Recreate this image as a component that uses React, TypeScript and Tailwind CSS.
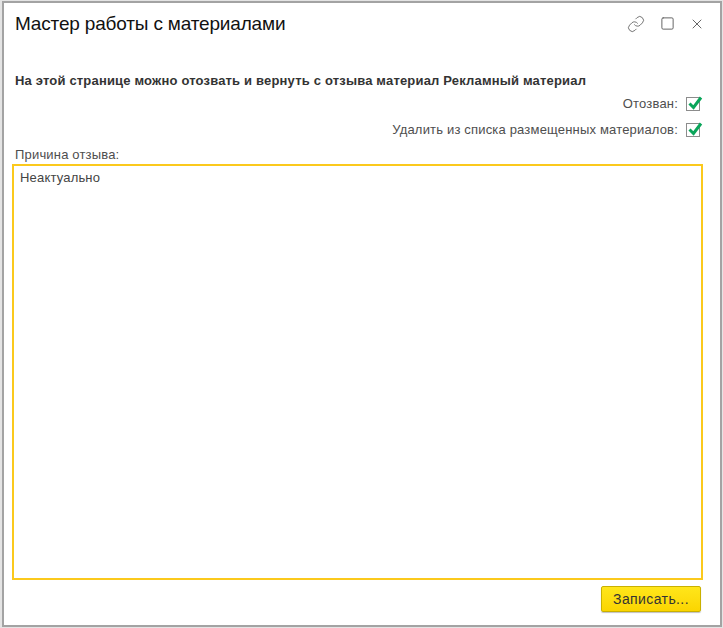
import { Link, Square, X } from 'lucide-react'

function CheckBox() {
  return (
    <span className="relative block h-[14px] w-[14px] border border-[#8c8c8c] bg-white">
      <svg viewBox="0 0 16 16" className="absolute -top-[3px] left-0 h-[16px] w-[16px]" fill="none">
        <path d="M2.5 8.5 L6.5 12.5 L14 2.5" stroke="#0aa55a" strokeWidth="3" />
      </svg>
    </span>
  )
}

export default function App() {
  return (
    <div className="h-[628px] w-[723px] bg-[#e4e4e4] pb-[1px] pl-[2px] pr-[1px] pt-[1px] font-['Liberation_Sans',Arial,sans-serif]">
      <div className="flex h-[626px] w-[720px] flex-col border-2 border-[#a3a3a3] bg-white">
        {/* Header */}
        <div className="flex h-[41px] items-center justify-between pl-[11px] pr-[15px]">
          <h1 className="text-[19px] font-normal leading-[24px] tracking-[-0.17px] text-[#111]">Мастер работы с материалами</h1>
          <div className="flex items-center gap-[14.5px] text-[#666]">
            <Link size={18} strokeWidth={1.2} />
            <Square size={15} strokeWidth={1.6} />
            <X size={16} strokeWidth={1.5} />
          </div>
        </div>

        {/* Body */}
        <div className="flex flex-1 flex-col pl-[8px] pr-[17px] pt-[29px] text-[13px] leading-[16px] tracking-[0.18px] text-[#4e4e4e]">
          <p className="whitespace-nowrap pl-[3px] font-bold text-[#333]">
            На этой странице можно отозвать и вернуть с отзыва материал Рекламный материал
          </p>
          <div className="mt-[7px] flex items-center justify-end gap-[8px] pr-[3px]">
            <span>Отозван:</span>
            <CheckBox />
          </div>
          <div className="mt-[10px] flex items-center justify-end gap-[8px] pr-[3px]">
            <span>Удалить из списка размещенных материалов:</span>
            <CheckBox />
          </div>
          <label className="mt-[9px] pl-[3px]">Причина отзыва:</label>
          <div className="mt-[1px] h-[416px] border-2 border-[#fbc91c] px-[6px] py-[4px] text-[#444]">Неактуально</div>
          <div className="mt-[6px] flex justify-end pr-[2px]">
            <button className="h-[26px] w-[100px] rounded-[2px] border border-[#c9b000] bg-gradient-to-b from-[#ffe619] to-[#fbd500] text-[14px] tracking-[0.4px] text-[#333] shadow-[0_1px_1px_rgba(0,0,0,0.25)]">
              Записать...
            </button>
          </div>
        </div>
      </div>
    </div>
  )
}
